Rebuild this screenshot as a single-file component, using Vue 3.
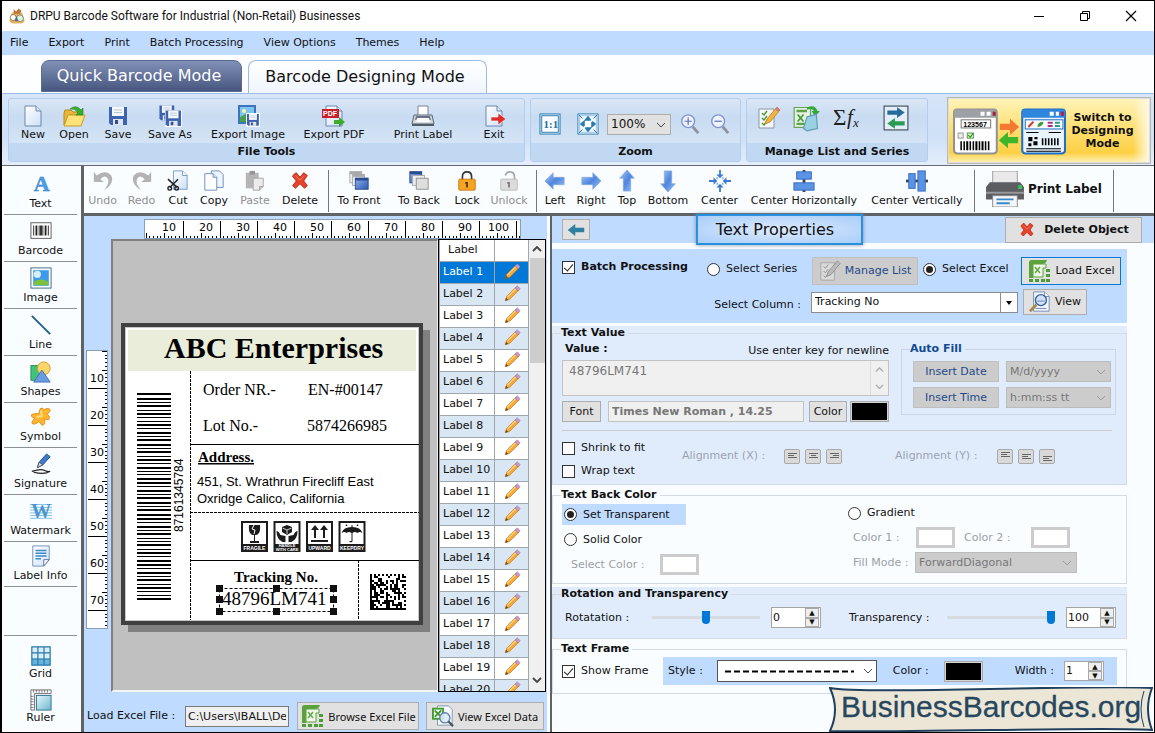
<script setup>
const menus = ['File', 'Export', 'Print', 'Batch Processing', 'View Options', 'Themes', 'Help']

const page = '<path d="M4 2h11l5 5v15H4z" fill="url(#gPage)" stroke="#6b87ad"/><path d="M15 2v5h5" fill="#dbe6f6" stroke="#6b87ad"/>'
const floppy = '<path d="M3 3h18v18H5l-2-2z" fill="#3d63b0"/><path d="M6 3h12v9H6z" fill="#f4f7fc"/><path d="M8 6h8M8 8.500h8" stroke="#b9c4d6"/><path d="M7 15h10v6H7z" fill="#dfe3ea"/><path d="M9 16h3v4H9z" fill="#2e4f93"/>'
const excel = '<path d="M2 3q0-2 3-2h15q-1 4-5 4H6v14H2z" fill="#5ba23c"/><path d="M6 5h13v4h-3v9H6z" fill="#eef7ea" stroke="#5ba23c"/><path d="M8 8l5 6M13 8l-5 6" stroke="#62a944" stroke-width="1.500"/><path d="M2 20h4v3H2zM8 20h4v3H8zM14 20h4v3h-4zM19 10h4v3h-4zM19 15h4v3h-4zM19 20h4v3h-4z" fill="#4e9a33"/>'
const notes = '<path d="M2 3h15v19H2z" fill="#f6f8fb" stroke="#8a97ab"/><path d="M5 7l2 2 3-4M5 12l2 2 3-4M5 17l2 2 3-4" fill="none" stroke="#4b9a35" stroke-width="1.400"/>'
const icons = {
  logo: '<path d="M5 8q7-5 14 0l3 10q-1 4-5 4H7q-4 0-5-4z" fill="#e7b061"/><circle cx="7" cy="14" r="4" fill="#fff" stroke="#8a5b2a"/><circle cx="16" cy="15" r="4.500" fill="#dff0e0" stroke="#6b7d55"/><path d="M7 3l4 3 3-4 4 3-2 4H8z" fill="#b6793a"/><path d="M11 12l3 7h-5z" fill="#4b6f8c"/>',
  new: page,
  open: '<path d="M2 9l1-3h6l2 2h8v3H7L2 21z" fill="#e8b73b" stroke="#b98a1c"/><path d="M2 22l4-11h17l-4 11z" fill="#ffe27a" stroke="#c99d2c"/><path d="M8 5q6-5 11 1l2-2v7h-7l2-2q-3-5-8-4z" fill="#35ad2f" stroke="#1f7f1c" stroke-width=".6"/>',
  save: floppy,
  saveAs: '<g transform="translate(-1 -1) scale(.82)">' + floppy + '</g><path d="M7 6h17v17H7z" fill="#fff"/><g transform="translate(5 4) scale(.86)">' + floppy + '</g>',
  exportImage: '<rect x="2" y="1" width="18" height="19" fill="#3e73bd"/><rect x="4" y="3" width="14" height="15" fill="#7ec4f0"/><circle cx="8" cy="7" r="2" fill="#fff3b0"/><path d="M4 18v-5l6-3 8 5v3z" fill="#4aa04a"/><path d="M10 9h14v14H10z" fill="#fff"/><g transform="translate(9 8) scale(.66)">' + floppy + '</g>',
  pdf: page + '<rect x="0" y="5" width="17" height="9" fill="#c5202c"/><text x="1" y="12" font-size="7" font-weight="bold" font-family="Liberation Sans" fill="#fff">PDF</text><path d="M12 16h5v-3l6 5-6 5v-3h-5z" fill="#3dab2b"/>',
  print: '<path d="M7 11V2h10v9" fill="#fff" stroke="#7a8493"/><path d="M3 11h18l2 9H1z" fill="#d5dae2" stroke="#596474"/><path d="M5 12h14l1 4H4z" fill="#687486"/><path d="M6 14h12l1 4H5z" fill="#f8fafc"/><path d="M1 20h22v2H1z" fill="#525c69"/>',
  exit: page + '<path d="M9 13h7v-4l8 6-8 6v-4H9z" fill="#df2b2b" stroke="#fff" stroke-width=".6"/>',
  one: '<rect x="1" y="1" width="22" height="22" fill="#cfe6f8" stroke="#2b7cae"/><rect x="3" y="3" width="18" height="18" fill="#f8fcff" stroke="#2b7cae"/><text x="5" y="16" font-size="12" font-weight="bold" font-family="Liberation Serif" fill="#1e6c9c">1:1</text>',
  fit: '<rect x="1" y="1" width="22" height="22" fill="#f3f9fe" stroke="#2b7cae"/><rect x="3" y="3" width="18" height="18" fill="none" stroke="#8fbfe0"/><path d="M12 3l5 6-2 1H9L7 9zM12 21l5-6-2-1H9l-2 1zM3 12l6-5v10zM21 12l-6-5v10z" fill="#2b7cae"/><rect x="8.500" y="8.500" width="7" height="7" fill="#fff"/><path d="M2 2l4 4M22 2l-4 4M2 22l4-4M22 22l-4-4" stroke="#2b7cae"/>',
  zoomIn: '<circle cx="10" cy="9" r="7" fill="#eef3ff" stroke="#8095d0" stroke-width="1.500"/><path d="M6 9h8M10 5v8" stroke="#5872b8" stroke-width="1.300"/><path d="M15 15l6 7" stroke="#8d929c" stroke-width="3"/>',
  zoomOut: '<circle cx="10" cy="9" r="7" fill="#eef3ff" stroke="#8095d0" stroke-width="1.500"/><path d="M6 9h8" stroke="#5872b8" stroke-width="1.300"/><path d="M15 15l6 7" stroke="#8d929c" stroke-width="3"/>',
  notes: notes + '<path d="M8 18l2-5L20 1l3 3-10 12z" fill="#f2b640" stroke="#b77d1c" stroke-width=".8"/><path d="M20 1l3 3-2 2-3-3z" fill="#d87a80"/>',
  notesOff: '<path d="M2 3h15v19H2z" fill="#dadada" stroke="#a5a5a5"/><path d="M5 7l2 2 3-4M5 12l2 2 3-4M5 17l2 2 3-4" fill="none" stroke="#8d8d8d"/><path d="M8 18l2-5L20 1l3 3-10 12z" fill="#bbb" stroke="#8f8f8f"/>',
  sheet: '<path d="M1 3h14v17H1z" fill="#e4f3df" stroke="#67a35a"/><path d="M3 6h9M3 17h9" stroke="#5fa04f" stroke-width="2"/><path d="M4 9l5 6M9 9l-5 6" stroke="#4c9a3b" stroke-width="1.500"/><path d="M12 3q7-3 9 3h2l-4 5-3-5h2q-2-3-6-1z" fill="#35a83a"/><path d="M12 11l8-2 1 12-9 2-3-2z" fill="#9bcfe3" stroke="#5d9db8"/>',
  sigma: '<text x="0" y="19" font-size="23" font-family="Liberation Serif" fill="#222">Σ</text><text x="14" y="18" font-size="21" font-style="italic" font-family="Liberation Serif" fill="#222">f</text><text x="20" y="21" font-size="13" font-style="italic" font-family="Liberation Serif" fill="#222">x</text>',
  swap: '<rect x="1" y="1" width="22" height="22" fill="#e4eefa" stroke="#3c4650"/><path d="M4 5h9V2l7 5-7 5V9H4z" fill="#256b99"/><path d="M20 15h-9v-3l-7 5 7 5v-3h9z" fill="#2c9b52"/>',
  undo: '<path d="M2 2v11h11l-4-3q5-5 8-1 3 5-4 13 12-7 8-16-6-7-16 0z" fill="#b3b3b3"/>',
  redo: '<path d="M22 2v11H11l4-3q-5-5-8-1-3 5 4 13Q-1 15 3 6q6-7 16 0z" fill="#b3b3b3"/>',
  cut: '<path d="M7 1h10l5 5v15H7z" fill="url(#gPage)" stroke="#6f98cf"/><path d="M17 1v5h5" fill="#fff" stroke="#6f98cf"/><path d="M1 10l10 9M12 10L3 19" stroke="#222" stroke-width="1.600"/><circle cx="3" cy="20" r="2" fill="none" stroke="#222" stroke-width="1.500"/><circle cx="10.500" cy="20" r="2" fill="none" stroke="#222" stroke-width="1.500"/>',
  copy: '<path d="M9 1h9l4 4v14H9z" fill="#eef5ff" stroke="#6889c0"/><path d="M2 4h9l4 4v14H2z" fill="#fff" stroke="#6889c0"/><path d="M11 4v4h4" fill="#dbe8fa" stroke="#6889c0"/>',
  paste: '<path d="M2 3h14v17H2z" fill="#b5b5b5"/><path d="M6 1h6v4H6z" fill="#969696"/><path d="M10 9h11v9l-4 4h-7z" fill="#ececec" stroke="#a3a3a3"/><path d="M21 18h-4v4" fill="#ccc" stroke="#a3a3a3"/>',
  cross: '<path d="M5 5l3-2 4 5 4-5 4 3-4 6 4 5-3 3-5-5-5 5-3-3 4-5-4-5z" fill="#e8432a" stroke="#b42413"/><path d="M7 6l5 5 4-4" fill="none" stroke="#f58a6e"/>',
  front: '<rect x="2" y="2" width="13" height="12" fill="#ededed" stroke="#a9a9a9"/><path d="M2 3h13" stroke="#a9a9a9" stroke-width="3"/><rect x="5" y="5" width="13" height="12" fill="#ededed" stroke="#a9a9a9"/><path d="M5 6h13" stroke="#a9a9a9" stroke-width="3"/><rect x="8" y="9" width="14" height="12" fill="url(#gBox)" stroke="#2c4c92"/><path d="M8 10h14" stroke="#2c4c92" stroke-width="3"/>',
  back: '<rect x="2" y="2" width="13" height="12" fill="url(#gBox)" stroke="#2c4c92"/><path d="M2 3h13" stroke="#2c4c92" stroke-width="3"/><rect x="5" y="6" width="13" height="11" fill="#ededed" stroke="#a9a9a9"/><rect x="9" y="9" width="13" height="12" fill="#dedede" stroke="#8f8f8f"/>',
  lock: '<path d="M7 11V7q0-5 5-5t5 5v4" fill="none" stroke="#333" stroke-width="1.800"/><rect x="3" y="10" width="18" height="12" rx="1" fill="#f5a524" stroke="#c97a10"/><path d="M12 14v5M10 14h3" stroke="#5a3700" stroke-width="2"/>',
  unlock: '<path d="M8 6q1-4 5-4 5 0 5 6v3" fill="none" stroke="#a5a5a5" stroke-width="1.800"/><rect x="3" y="10" width="18" height="12" rx="1" fill="#dcdcdc" stroke="#b9b9b9"/><path d="M12 14v5M10 14h3" stroke="#7b7b7b" stroke-width="2"/>',
  left: '<path d="M1 12l9-9v5h12v8H10v5z" fill="url(#gArrow)" stroke="#7da2dc" stroke-width=".7"/>',
  right: '<path d="M23 12l-9-9v5H2v8h12v5z" fill="url(#gArrow)" stroke="#7da2dc" stroke-width=".7"/>',
  top: '<path d="M12 0l8 9h-4v14H8V9H4z" fill="url(#gArrow)" stroke="#7da2dc" stroke-width=".7"/>',
  bottom: '<path d="M12 24l8-9h-4V1H8v14H4z" fill="url(#gArrow)" stroke="#7da2dc" stroke-width=".7"/>',
  center: '<path d="M12 9L8 5h3V0h2v5h3zM12 15l4 4h-3v5h-2v-5H8zM9 12l-4 4v-3H0v-2h5V8zM15 12l4-4v3h5v2h-5v3z" fill="#3f7ad0"/><path d="M8 8h2v2H8zM14 8h2v2h-2zM8 14h2v2H8zM14 14h2v2h-2z" fill="#8fb4ea"/>',
  horiz: '<path d="M12 0v24" stroke="#3b4250" stroke-width="3"/><rect x="4" y="2" width="16" height="8" fill="#5b94e6" stroke="#3368bd"/><rect x="1" y="14" width="22" height="8" fill="#5b94e6" stroke="#3368bd"/>',
  vert: '<path d="M0 12h24" stroke="#3b4250" stroke-width="3"/><rect x="3" y="4" width="7" height="16" fill="#5b94e6" stroke="#3368bd"/><rect x="13" y="1" width="8" height="22" fill="#5b94e6" stroke="#3368bd"/>',
  printer: '<path d="M7 0h26v13H7z" fill="#e9e9e9" stroke="#9a9a9a"/><path d="M4 12h32l4 5v13H0V17z" fill="#5b5d60"/><path d="M0 22h40v2H0z" fill="#96999c"/><path d="M34 15h4v4h-4z" fill="#37c25c"/><path d="M7 26h26v12H7z" fill="#f4f6f8" stroke="#86898d"/><path d="M11 30h18M11 34h14" stroke="#3b86c6" stroke-width="2"/>',
  text: '<text x="4" y="20" font-size="24" font-weight="bold" font-family="Liberation Serif" fill="#4ba0e8" stroke="#2f78c0" stroke-width=".5">A</text>',
  barcode: '<rect x="1" y="3" width="22" height="17" fill="#fff" stroke="#555"/><path d="M4 6v11M10 6v11M14 6v11M20 6v11" stroke="#222" stroke-width="1"/><path d="M7 6v11M12 6v11M17 6v11" stroke="#222" stroke-width="2"/>',
  image: '<rect x="1" y="1" width="22" height="22" fill="#fff" stroke="#3d6184"/><rect x="3.500" y="3.500" width="17" height="17" fill="#3c9be9"/><circle cx="8" cy="8" r="4" fill="#d7efff"/><path d="M4 20v-4q8-5 16 0v4z" fill="#7cc23c"/>',
  line: '<path d="M2 2l20 20" stroke="#1d5f8c" stroke-width="2"/>',
  shapes: '<rect x="1" y="5" width="12" height="16" fill="#43c27b" stroke="#248a50"/><circle cx="15" cy="8" r="7" fill="#fcd568" stroke="#c8992a"/><path d="M13 10l9 13H4z" fill="#6a9ce2" stroke="#3c6db5"/>',
  symbol: '<path d="M11 3q3-2 4 1 7-3 7 1l-3 4q4 4 1 6l-4-1q1 7-3 7l-3-4q-7 5-8 1l3-5q-5-1-3-4l8-1z" fill="#ffb52e" stroke="#dd8a14"/><path d="M12 5l1 6-6 1" fill="none" stroke="#ffdf87" stroke-width="2"/>',
  signature: '<path d="M8 16l2-6L18 1l4 3-8 9z" fill="#3e7ac9" stroke="#264f8c"/><path d="M8 16l2-6 4 3z" fill="#d8dde5" stroke="#555"/><path d="M2 20q10-3 14-1t6 1q-6 4-18 1" fill="none" stroke="#222" stroke-width="1.300"/>',
  watermark: '<path d="M0 5h24M0 8h24M0 11h24M0 14h24M0 17h24M0 20h24" stroke="#79bde6"/><text x="1" y="20" font-size="22" font-weight="bold" font-family="Liberation Serif" fill="#4a96cf">W</text>',
  info: '<path d="M3 1h18v15l-6 7H3z" fill="url(#gPage)" stroke="#6d8db8"/><path d="M6 6h12M6 9h12M6 12h12M6 15h6" stroke="#3c8bc4" stroke-width="1.400"/><path d="M21 16h-6v7z" fill="#fff" stroke="#54739c"/>',
  grid: '<rect x="2" y="2" width="20" height="20" fill="#d8eef9"/><path d="M2 15h20v7H2z" fill="#63b5df"/><path d="M2 2h20v20H2zM8.600 2v20M15.300 2v20M2 8.600h20M2 15.300h20" fill="none" stroke="#2b75a8" stroke-width="1.300"/>',
  ruler: '<path d="M1 1h22v4H5v18H1z" fill="#fff" stroke="#666"/><path d="M4 1v3M7 1v3M10 1v3M13 1v3M16 1v3M19 1v3M1 8h3M1 11h3M1 14h3M1 17h3M1 20h3" stroke="#555" stroke-width=".8"/><rect x="7" y="7" width="16" height="16" fill="url(#gTeal)" stroke="#2f6f93"/>',
  pencil: '<path d="M3 21l2-6L17 3l4 4L9 19z" fill="#f7a835" stroke="#b8741a" stroke-width=".8"/><path d="M6 16L18 4" stroke="#ffd488" stroke-width="1.600"/><path d="M16 4l3-3 4 4-3 3z" fill="#c59bc6" stroke="#8a6692" stroke-width=".6"/><path d="M3 21l1-4 3 3z" fill="#6b4a26"/>',
  excel,
  excelView: '<path d="M6 1h12l4 4v17H6z" fill="#f8fbff" stroke="#7f90a8"/><rect x="0" y="3" width="13" height="13" fill="#3f9a2f"/><path d="M2 5h9v9H2z" fill="#fff"/><path d="M3 6l7 7M10 6l-7 7" stroke="#3f9a2f" stroke-width="2"/><circle cx="14" cy="14" r="5.500" fill="#dbeaf9" fill-opacity=".9" stroke="#6382b0" stroke-width="1.500"/><path d="M18 18l5 5" stroke="#4a5361" stroke-width="2.500"/>',
  view: '<path d="M5 1h12l5 5v16H5z" fill="#f2f7ff" stroke="#6d88b5"/><path d="M17 1v5h5" fill="#fff" stroke="#6d88b5"/><circle cx="13" cy="10" r="6" fill="#cfe2f7" stroke="#3e5f96" stroke-width="1.500"/><path d="M9 11h8M7 19h12" stroke="#5f83bd"/><path d="M8 15l-7 7" stroke="#a88a45" stroke-width="3"/>',
  arrowBack: '<path d="M1 12l10-8v5h12v6H11v5z" fill="#2f7f9f"/>'
}

const fileTools = [
  ['new', 'New'], ['open', 'Open'], ['save', 'Save'], ['saveAs', 'Save As'],
  ['exportImage', 'Export Image'], ['pdf', 'Export PDF'], ['print', 'Print Label'], ['exit', 'Exit']
]
const editTools = [
  ['undo', 'Undo', 'off'], ['redo', 'Redo', 'off'], ['cut', 'Cut'], ['copy', 'Copy'],
  ['paste', 'Paste', 'off'], ['cross', 'Delete'], null,
  ['front', 'To Front'], ['back', 'To Back'], ['lock', 'Lock'], ['unlock', 'Unlock', 'off'], null,
  ['left', 'Left'], ['right', 'Right'], ['top', 'Top'], ['bottom', 'Bottom'],
  ['center', 'Center'], ['horiz', 'Center Horizontally'], ['vert', 'Center Vertically'], null
]
const sideTools = [
  ['text', 'Text'], ['barcode', 'Barcode'], ['image', 'Image'], ['line', 'Line'], ['shapes', 'Shapes'],
  ['symbol', 'Symbol', 'short'], ['signature', 'Signature'], ['watermark', 'Watermark'], ['info', 'Label Info', 'short']
]
const rows = Array.from({ length: 20 }, (_, i) => 'Label ' + (i + 1))

const hTicks = Array.from({ length: 102 }, (_, i) => ({
  p: Math.round(1.5 + i * 3.7), len: i % 10 === 0 && i > 0 ? 17 : i % 5 === 0 ? 5 : 2
}))
const vTicks = Array.from({ length: 75 }, (_, i) => ({
  p: Math.round(1 + i * 3.7), len: i % 10 === 0 && i > 0 ? 19 : i % 5 === 0 ? 5 : 2
}))

const bars = []
const barPattern = '2212121121212212121211221212212'
let y = 393
for (let i = 0; y < 600; i++) {
  const h = Number(barPattern[i % barPattern.length])
  bars.push({ y, h: Math.min(h, 600 - y) })
  y += h + (i % 3 === 0 ? 3 : 2)
}

const cells = []
let seed = 77
for (let r = 0; r < 18; r++) {
  for (let c = 0; c < 18; c++) {
    seed = (seed * 1103515245 + 12345) % 2147483648
    const edge = c === 0 || r === 17
    const clock = (r === 0 && c % 2 === 0) || (c === 17 && r % 2 === 1)
    const inner = r > 0 && c < 17 && (seed >> 12) % 100 < 52
    if (edge || clock || inner) cells.push({ r, c })
  }
}
const handles = []
for (const hx of [219, 276, 333]) {
  for (const hy of [588, 599, 611]) {
    if (!(hx === 276 && hy === 599)) handles.push({ x: hx - 3, y: hy - 3 })
  }
}
</script>

<template>
  <div class="window">
    <svg class="defs" width="0" height="0" aria-hidden="true">
      <defs>
        <linearGradient id="gPage" x1="0" y1="0" x2="1" y2="1"><stop offset="0" stop-color="#fff" /><stop offset="1" stop-color="#cfe0f7" /></linearGradient>
        <linearGradient id="gBox" x1="0" y1="0" x2="1" y2="1"><stop offset="0" stop-color="#8fb2ec" /><stop offset="1" stop-color="#2d57b0" /></linearGradient>
        <linearGradient id="gArrow" x1="0" y1="0" x2="1" y2="1"><stop offset="0" stop-color="#a9cbfb" /><stop offset=".5" stop-color="#4f86de" /><stop offset="1" stop-color="#9dc1f6" /></linearGradient>
        <linearGradient id="gTeal" x1="0" y1="0" x2="1" y2="1"><stop offset="0" stop-color="#e6f6fb" /><stop offset="1" stop-color="#6fb7cf" /></linearGradient>
      </defs>
    </svg>

    <header class="titlebar">
      <svg class="i18" viewBox="0 0 24 24" v-html="icons.logo"></svg>
      <h1>DRPU Barcode Software for Industrial (Non-Retail) Businesses</h1>
      <div class="winbtns">
        <button aria-label="Minimize"><svg width="12" height="12"><path d="M1 6.500h10" stroke="#000" /></svg></button>
        <button aria-label="Restore"><svg width="12" height="12"><path d="M1.500 3.500h7v7h-7zM3.500 3V1.500h7v7H9" fill="none" stroke="#000" /></svg></button>
        <button aria-label="Close"><svg width="12" height="12"><path d="M1 1l10 10M11 1L1 11" stroke="#000" stroke-width="1.200" /></svg></button>
      </div>
    </header>

    <nav class="menubar"><button v-for="m in menus" :key="m">{{ m }}</button></nav>

    <div class="tabs">
      <button class="tab quick">Quick Barcode Mode</button>
      <button class="tab design">Barcode Designing Mode</button>
    </div>

    <div class="ribbon">
      <section class="group g-file">
        <div class="file-tools">
          <button v-for="[ic, t] in fileTools" :key="t" class="tool">
            <svg class="i24" viewBox="0 0 24 24" v-html="icons[ic]"></svg><span>{{ t }}</span>
          </button>
        </div>
        <h2>File Tools</h2>
      </section>
      <section class="group g-zoom">
        <div class="zoom-tools">
          <button aria-label="Actual size"><svg class="i22" viewBox="0 0 24 24" v-html="icons.one"></svg></button>
          <button aria-label="Fit to window"><svg class="i22" viewBox="0 0 24 24" v-html="icons.fit"></svg></button>
          <span class="sel zoomsel">
            <select aria-label="Zoom level"><option>100%</option></select>
            <svg viewBox="0 0 10 6"><path d="M1 1l4 4 4-4" fill="none" stroke="#444" /></svg>
          </span>
          <button aria-label="Zoom in"><svg class="i22" viewBox="0 0 24 24" v-html="icons.zoomIn"></svg></button>
          <button aria-label="Zoom out"><svg class="i22" viewBox="0 0 24 24" v-html="icons.zoomOut"></svg></button>
        </div>
        <h2>Zoom</h2>
      </section>
      <section class="group g-manage">
        <div class="manage-tools">
          <button aria-label="Manage list"><svg class="i24" viewBox="0 0 24 24" v-html="icons.notes"></svg></button>
          <button aria-label="Manage Excel"><svg class="i28" viewBox="0 0 24 24" v-html="icons.sheet"></svg></button>
          <button aria-label="Formula series"><svg width="28" height="24" viewBox="0 0 28 24" v-html="icons.sigma"></svg></button>
          <button aria-label="Swap"><svg class="i26" viewBox="0 0 24 24" v-html="icons.swap"></svg></button>
        </div>
        <h2>Manage List and Series</h2>
      </section>
      <button class="switch">
        <span class="switch-in">
          <svg width="113" height="50" viewBox="0 0 111 48">
            <rect x="1" y="3" width="42" height="43" rx="3" fill="#fff" stroke="#8f9296" stroke-width="2" />
            <path d="M1 3h42v8H1z" fill="#9da0a4" /><path d="M27 5h4v4h-4zM33 5h4v4h-4z" fill="#fff" /><path d="M39 5h3v4h-3z" fill="#a02434" />
            <rect x="8" y="13" width="29" height="8" fill="#fff" stroke="#777" />
            <text x="10" y="20" font-size="7" font-weight="bold" font-family="Liberation Sans">123567</text>
            <rect x="5" y="26" width="5" height="5" fill="#eee" stroke="#999" /><rect x="14" y="26" width="6" height="5" fill="#dff3d8" stroke="#5c9a4c" /><path d="M15 28l2 2 3-4" fill="none" stroke="#2a8a2a" />
            <path d="M8 34v9M11 34v9M17 34v9M20 34v9M26 34v9M32 34v9M35 34v9" stroke="#000" stroke-width="1.500" /><path d="M14 34v9M23 34v9M29 34v9" stroke="#000" stroke-width="2" />
            <path d="M46 17h10v-5l9 8-9 8v-5H46z" fill="#f47a34" /><path d="M64 30H54v-5l-9 8 9 8v-5h10z" fill="#3fb52c" />
            <rect x="68" y="3" width="42" height="43" rx="3" fill="#e9f4ff" stroke="#1f6fc4" stroke-width="2" />
            <path d="M68 3h42v8H68z" fill="#2f86dc" /><path d="M95 5h4v4h-4zM101 5h3v4h-3z" fill="#fff" /><path d="M106 5h3v4h-3z" fill="#b02040" />
            <rect x="71" y="13" width="37" height="9" fill="#fff" stroke="#1f6fc4" />
            <path d="M74 20l5-5" stroke="#d0382c" stroke-width="2" /><path d="M83 20q0-5 6-5-1 5-6 5z" fill="#3a9a3a" /><path d="M93 16h5M93 19h5" stroke="#b0308a" stroke-width="2" /><path d="M100 16h5M100 19h5" stroke="#2f9a8a" stroke-width="2" />
            <path d="M72 25.500h12M94 25.500h12M72 41.500h34M72 44h34" stroke="#000" /><path d="M74 30h4v4h-4zM80 30h3v2h-3zM74 36h3v3h-3zM79 34h4v4h-4z" fill="#000" />
            <path d="M88 31v7M91 31v7M94 31v7M97 31v7M100 31v7M103 31v7" stroke="#000" stroke-width="1.500" />
          </svg>
          <b>Switch to Designing Mode</b>
        </span>
      </button>
    </div>

    <div class="workspace">
      <aside class="side">
        <button v-for="[ic, t, k] in sideTools" :key="t" class="stool" :class="k">
          <svg class="i22" viewBox="0 0 24 24" v-html="icons[ic]"></svg><span>{{ t }}</span>
        </button>
        <div class="side-gap"></div>
        <button class="stool plain"><svg class="i22" viewBox="0 0 24 24" v-html="icons.grid"></svg><span>Grid</span></button>
        <button class="stool plain"><svg class="i22" viewBox="0 0 24 24" v-html="icons.ruler"></svg><span>Ruler</span></button>
      </aside>

      <div class="main">
        <div class="editbar">
          <template v-for="(e, i) in editTools" :key="i">
            <button v-if="e" class="tool" :class="e[2]" :disabled="!!e[2]">
              <svg class="i22" viewBox="0 0 24 24" v-html="icons[e[0]]"></svg><span>{{ e[1] }}</span>
            </button>
            <i v-else class="vsep"></i>
          </template>
          <button class="printlabel"><svg width="38" height="36" viewBox="0 0 40 38" v-html="icons.printer"></svg><b>Print Label</b></button>
          <i class="vsep"></i>
        </div>

        <div class="panes">
          <div class="designer">
            <svg class="hruler" width="377" height="20">
              <rect x=".5" y=".5" width="376" height="19" fill="#fff" stroke="#8aa0b8" />
              <rect v-for="t in hTicks" :key="t.p" :x="t.p" :y="19 - t.len" width="1" :height="t.len" />
              <text v-for="n in 10" :key="n" :x="n * 37 - 5" y="12" text-anchor="end">{{ n * 10 }}</text>
            </svg>
            <svg class="vruler" width="22" height="279">
              <rect x=".5" y=".5" width="21" height="278" fill="#fff" stroke="#8aa0b8" />
              <rect v-for="t in vTicks" :key="t.p" :x="21 - t.len" :y="t.p" :width="t.len" height="1" />
              <text v-for="n in 7" :key="n" x="18" :y="n * 37 - 5" text-anchor="end">{{ n * 10 }}</text>
            </svg>
            <div class="canvas">
              <svg width="310" height="310" viewBox="121 323 310 310">
                <rect x="128" y="330" width="302" height="302" fill="#808080" />
                <rect x="121" y="323" width="302" height="302" fill="#404040" />
                <rect x="125.500" y="327.500" width="293" height="293" fill="#fff" stroke="#c8c8c8" />
                <rect x="128" y="330" width="288" height="41" fill="#e9edda" />
                <g font-family="Liberation Serif, serif" font-size="16">
                  <text x="164" y="358" font-size="30" font-weight="bold">ABC Enterprises</text>
                  <text x="203" y="395">Order NR.-</text>
                  <text x="308" y="395">EN-#00147</text>
                  <text x="203" y="431">Lot No.-</text>
                  <text x="307" y="431">5874266985</text>
                  <text x="198" y="462" font-weight="bold" font-size="15" text-decoration="underline">Address.</text>
                  <text x="234" y="582" font-weight="bold" font-size="15">Tracking No.</text>
                  <text x="222" y="605" font-size="19">48796LM741</text>
                </g>
                <g class="address"><text x="197" y="486">451, St. Wrathrun Firecliff East</text><text x="197" y="503">Oxridge Calico, California</text></g>
                <g stroke="#000" fill="none" stroke-width="1">
                  <path d="M190.500 371v249M190 512.500h229M358.500 560v60" stroke-dasharray="3 1" />
                  <path d="M190 444.500h229M190 560.500h229" />
                  <rect x="219.500" y="588.500" width="114" height="23" stroke-dasharray="3 2" />
                </g>
                <rect v-for="b in bars" :key="b.y" x="137" :y="b.y" width="34" :height="b.h" />
                <text x="0" y="0" transform="translate(183 532) rotate(-90)" font-family="Liberation Sans" font-size="12">87161345784</text>
                <rect v-for="h in handles" :key="h.x + '-' + h.y" :x="h.x" :y="h.y" width="7" height="7" fill="#111" />
                <rect v-for="c in cells" :key="c.r + '-' + c.c" :x="370 + c.c * 2" :y="574 + c.r * 2" width="2" height="2" />
                <g v-for="(n, i) in ['FRAGILE', 'HANDLE', 'UPWARD', 'KEEPDRY']" :key="n" :transform="`translate(${241 + i * 32.5} 521)`">
                  <rect width="27" height="31" fill="#1c1c1c" /><rect x="2" y="2" width="23" height="21" fill="#fff" />
                  <text x="13.500" :y="i === 1 ? 26 : 29" :font-size="i === 1 ? 4 : 5" font-weight="bold" font-family="Liberation Sans" fill="#fff" text-anchor="middle">{{ n }}</text>
                  <text v-if="i === 1" x="13.500" y="30" font-size="4" font-weight="bold" font-family="Liberation Sans" fill="#fff" text-anchor="middle">WITH CARE</text>
                  <path v-if="i === 0" d="M8 4h11q1 10-5 10v6h4v2H9v-2h4v-6Q7 14 8 4z" fill="#1c1c1c" />
                  <path v-if="i === 0" d="M13 4l-2 4 3 1-1 4" stroke="#fff" fill="none" />
                  <path v-if="i === 1" d="M13.500 4l5 2v5l-5 3-5-3V6zM3 10q2 0 4 4l5 1v6H9Q3 18 3 10zM24 10q-2 0-4 4l-5 1v6h3q6-3 6-11z" fill="#1c1c1c" />
                  <path v-if="i === 1" d="M9 7l4.500 2L18 7M13.500 9v4" stroke="#fff" stroke-width=".8" fill="none" />
                  <path v-if="i === 2" d="M5 19h17v2H5zM8 17V9H5l4-5 4 5h-3v8zM17 17V9h-3l4-5 4 5h-3v8z" fill="#1c1c1c" />
                  <path v-if="i === 3" d="M3 12Q5 6 13 6V4h1v2q8 0 10 6-3-2-5 0-3-2-5 0v8q0 2-3 1v-1h2v-8q-3-2-5 0-2-2-5 0zM8 3l1 2H7zM19 3l1 2h-2z" fill="#1c1c1c" />
                </g>
              </svg>
            </div>
            <div class="list">
              <div class="list-rows">
                <table>
                  <thead><tr><th>Label</th><th></th></tr></thead>
                  <tbody>
                    <tr v-for="r in rows" :key="r">
                      <td>{{ r }}</td>
                      <td><button :aria-label="'Edit ' + r"><svg class="i18" viewBox="0 0 24 24" v-html="icons.pencil"></svg></button></td>
                    </tr>
                  </tbody>
                </table>
              </div>
              <div class="scroll">
                <svg viewBox="0 0 10 6"><path d="M1 5l4-4 4 4" fill="none" stroke="#444" stroke-width="1.800" /></svg>
                <i></i>
                <svg viewBox="0 0 10 6"><path d="M1 1l4 4 4-4" fill="none" stroke="#444" stroke-width="1.800" /></svg>
              </div>
            </div>
            <div class="loadbar">
              <label for="xls">Load Excel File :</label>
              <input id="xls" value="C:\Users\IBALL\Desktop" readonly />
              <button class="btn browse"><svg class="i24" viewBox="0 0 24 24" v-html="icons.excel"></svg>Browse Excel File</button>
              <button class="btn viewdata"><svg class="i22" viewBox="0 0 24 24" v-html="icons.excelView"></svg>View Excel Data</button>
            </div>
          </div>

          <div class="props">
            <div class="props-head">
              <button class="btn backbtn" aria-label="Back"><svg class="i18" viewBox="0 0 24 24" v-html="icons.arrowBack"></svg></button>
              <h2>Text Properties</h2>
              <button class="btn delobj"><svg class="i18" viewBox="0 0 24 24" v-html="icons.cross"></svg><b>Delete Object</b></button>
            </div>

            <div class="batch">
              <div class="batch-row">
                <label class="chk b-main"><input type="checkbox" checked /><b>Batch Processing</b></label>
                <label class="chk b-series"><input type="radio" name="src" />Select Series</label>
                <button class="btn dis b-manage" disabled><svg class="i22" viewBox="0 0 24 24" v-html="icons.notesOff"></svg>Manage List</button>
                <label class="chk b-excel"><input type="radio" name="src" checked />Select Excel</label>
                <button class="btn load"><svg class="i24" viewBox="0 0 24 24" v-html="icons.excel"></svg>Load Excel</button>
              </div>
              <div class="batch-row second">
                <label class="b-col" for="col">Select Column :</label>
                <span class="sel colsel">
                  <select id="col"><option>Tracking No</option></select>
                  <svg viewBox="0 0 10 6"><path d="M2 1h6L5 5z" /></svg>
                </span>
                <button class="btn viewbtn"><svg class="i22" viewBox="0 0 24 24" v-html="icons.view"></svg>View</button>
              </div>
            </div>

            <section class="block tint">
              <fieldset>
                <legend>Text Value</legend>
                <div class="tv-top">
                  <div class="tv-left">
                    <div class="tv-head"><label for="val"><b>Value :</b></label><span>Use enter key for newline</span></div>
                    <div class="area">
                      <textarea id="val" disabled>48796LM741</textarea>
                      <div class="area-scroll">
                        <svg viewBox="0 0 10 6"><path d="M1 5l4-4 4 4" fill="none" stroke="#aaa" stroke-width="1.500" /></svg>
                        <svg viewBox="0 0 10 6"><path d="M1 1l4 4 4-4" fill="none" stroke="#aaa" stroke-width="1.500" /></svg>
                      </div>
                    </div>
                    <div class="fontrow">
                      <button class="btn fontbtn">Font</button>
                      <input aria-label="Font name" value="Times New Roman , 14.25" disabled />
                      <button class="btn colorbtn">Color</button>
                      <button class="swatch" aria-label="Text color"></button>
                    </div>
                  </div>
                  <fieldset class="autofill">
                    <legend>Auto Fill</legend>
                    <div class="af-grid">
                      <button class="btn dis" disabled>Insert Date</button>
                      <span class="sel off"><select aria-label="Date format" disabled><option>M/d/yyyy</option></select><svg viewBox="0 0 10 6"><path d="M1 1l4 4 4-4" fill="none" stroke="#999" /></svg></span>
                      <button class="btn dis" disabled>Insert Time</button>
                      <span class="sel off"><select aria-label="Time format" disabled><option>h:mm:ss tt</option></select><svg viewBox="0 0 10 6"><path d="M1 1l4 4 4-4" fill="none" stroke="#999" /></svg></span>
                    </div>
                  </fieldset>
                </div>
                <div class="tv-bottom">
                  <div class="stack">
                    <label class="chk"><input type="checkbox" />Shrink to fit</label>
                    <label class="chk"><input type="checkbox" />Wrap text</label>
                  </div>
                  <div class="align"><span>Alignment (X) :</span>
                    <button v-for="(d, i) in ['M3 3h9M3 5h6M3 7h9', 'M3 3h9M5 5h5M3 7h9', 'M3 3h9M6 5h6M3 7h9']" :key="i" disabled :aria-label="'Horizontal ' + (i + 1)"><svg width="14" height="13"><path :d="d" transform="translate(0 .5)" stroke="#666" /></svg></button>
                  </div>
                  <div class="align"><span>Alignment (Y) :</span>
                    <button v-for="(d, i) in ['M3 2h9M3 4h6M3 6h9', 'M3 4h9M3 6h6M3 8h9', 'M3 6h9M3 8h6M3 10h9']" :key="i" disabled :aria-label="'Vertical ' + (i + 1)"><svg width="14" height="13"><path :d="d" transform="translate(0 .5)" stroke="#666" /></svg></button>
                  </div>
                </div>
              </fieldset>
            </section>

            <section class="block">
              <fieldset>
                <legend>Text Back Color</legend>
                <div class="backcolor">
                  <div class="bc-left">
                    <label class="chk hot"><input type="radio" name="bc" checked />Set Transparent</label>
                    <label class="chk"><input type="radio" name="bc" />Solid Color</label>
                    <div class="bc-line mute"><span>Select Color :</span><button class="swatch white" aria-label="Solid color" disabled></button></div>
                  </div>
                  <div class="bc-right">
                    <label class="chk"><input type="radio" name="bc" />Gradient</label>
                    <div class="bc-colors mute">
                      <span>Color 1 :</span><button class="swatch white" aria-label="Color 1" disabled></button>
                      <span class="c2">Color 2 :</span><button class="swatch white" aria-label="Color 2" disabled></button>
                    </div>
                    <div class="bc-fill mute">
                      <label for="fill">Fill Mode :</label>
                      <span class="sel off"><select id="fill" disabled><option>ForwardDiagonal</option></select><svg viewBox="0 0 10 6"><path d="M1 1l4 4 4-4" fill="none" stroke="#999" /></svg></span>
                    </div>
                  </div>
                </div>
              </fieldset>
            </section>

            <section class="block tint">
              <fieldset>
                <legend>Rotation and Transparency</legend>
                <div class="rot">
                  <label class="rot-l" for="rot">Rotatation :</label><input id="rot" type="range" min="0" max="100" value="50" />
                  <span class="spin"><input aria-label="Rotation value" value="0" /><span><button aria-label="More">▲</button><button aria-label="Less">▼</button></span></span>
                  <label class="rot-t" for="tr">Transparency :</label><input id="tr" type="range" min="0" max="100" value="100" />
                  <span class="spin"><input aria-label="Transparency value" value="100" /><span><button aria-label="More">▲</button><button aria-label="Less">▼</button></span></span>
                </div>
              </fieldset>
            </section>

            <section class="block last">
              <fieldset>
                <legend>Text Frame</legend>
                <div class="frame">
                  <label class="chk"><input type="checkbox" checked />Show Frame</label>
                  <div class="framebar">
                    <span>Style :</span>
                    <button class="stylesel" aria-label="Frame style">
                      <svg width="129" height="3"><path d="M0 1.500h129" stroke="#000" stroke-width="2" stroke-dasharray="6 3" /></svg>
                      <svg width="10" height="6"><path d="M1 1l4 4 4-4" fill="none" stroke="#444" /></svg>
                    </button>
                    <span>Color :</span><button class="swatch" aria-label="Frame color"></button>
                    <label for="fw">Width :</label>
                    <span class="spin narrow"><input id="fw" value="1" /><span><button aria-label="More">▲</button><button aria-label="Less">▼</button></span></span>
                  </div>
                </div>
              </fieldset>
            </section>
          </div>
        </div>
      </div>
    </div>

    <a class="banner" href="#">
      <svg width="324" height="45" viewBox="0 0 324 45">
        <path d="M1 1q20 4 160 1T323 1q-8 21 0 42-20-2-160 0T1 44q10-21 0-43z" fill="#ece6d6" stroke="#21405f" stroke-width="2" />
        <path d="M315 4q-6 18 0 36" fill="none" stroke="#21405f" stroke-width="1" />
        <text x="12" y="30" font-family="Liberation Sans, sans-serif" font-size="30" fill="#27475f" stroke="#27475f" stroke-width=".3">BusinessBarcodes.org</text>
      </svg>
    </a>
  </div>
</template>

<style>
body { background: #fff; }
</style>

<style scoped>
* { box-sizing: border-box; }
.window { position: relative; display: flex; flex-direction: column; height: 100vh; overflow: hidden; border: 1px solid #000; border-left-width: 2px; background: #fafdff; color: #111; font-family: "DejaVu Sans", Verdana, sans-serif; font-size: 11px; line-height: 14px; }
.defs { position: absolute; }
button, input, select, textarea { font: inherit; color: inherit; margin: 0; }
button { border: 0; background: none; padding: 0; }
svg { display: block; flex: none; }
h1, h2 { margin: 0; }
.i18 { width: 18px; height: 18px; }
.i22 { width: 22px; height: 22px; }
.i24 { width: 24px; height: 24px; }
.i26 { width: 26px; height: 26px; }
.i28 { width: 28px; height: 28px; }

.titlebar { display: flex; align-items: center; gap: 4px; height: 30px; padding-left: 6px; background: #fff; flex: none; }
.titlebar h1 { flex: 1; font: 12px Roboto, "Noto Sans", sans-serif; }
.winbtns { display: flex; }
.winbtns button { display: grid; place-items: center; width: 46px; height: 30px; }
.menubar { display: flex; gap: 20px; height: 24px; padding: 0 8px; background: #bfdbff; flex: none; }
.tabs { display: flex; gap: 6px; height: 38px; padding: 5px 39px 0; background: #fcfeff; flex: none; }
.tab { padding: 0 5px 0 0; height: 33px; font-size: 16px; white-space: nowrap; border-radius: 8px 8px 0 0; }
.quick { width: 201px; height: 32px; color: #fff; background: linear-gradient(#8090b6, #46567f); border: 1px solid #5a6a92; }
.design { width: 239px; background: linear-gradient(#fff, #eff5fd); border: 1px solid #9dbbe4; border-bottom: 0; }

.ribbon { display: flex; height: 73px; padding: 4px 3px 0 6px; flex: none; background: linear-gradient(#d6e5f7, #cfe1f7 60%, #e4eefb); border-top: 1px solid #9dbbe4; border-bottom: 1px solid #666b75; }
.group { display: flex; flex-direction: column; height: 64px; border: 1px solid #b3cdec; border-radius: 3px; background: linear-gradient(#dae7f6, #c8dbf1 30%, #d4e4f6 70%); }
.group h2 { margin-top: auto; height: 18px; font-size: 11px; line-height: 18px; text-align: center; background: #c0d8f2; }
.g-file { width: 517px; }
.g-zoom { width: 211px; margin-left: 5px; }
.g-manage { width: 182px; margin-left: 5px; }
.tool { display: flex; flex-direction: column; align-items: center; white-space: nowrap; min-width: 0; }
.file-tools { display: grid; grid-template-columns: 40px 42px 46px 58px 98px 74px 104px 38px; padding: 5px 0 0 4px; }
.file-tools .tool { height: 37px; justify-content: space-between; }
.zoom-tools { display: flex; align-items: center; gap: 8px; padding: 14px 0 0 8px; }
.zoom-tools > button:nth-child(2) { margin-left: 8px; }
.sel { position: relative; display: block; }
.sel select { display: block; width: 100%; height: 21px; padding: 0 3px; appearance: none; border: 1px solid #8c8c8c; border-radius: 0; background: #fff; }
.sel svg { position: absolute; right: 5px; top: 8px; width: 10px; height: 6px; pointer-events: none; }
.sel.off select { background: #ccc; border-color: #bcbcbc; color: #777; opacity: 1; }
.zoomsel { width: 64px; }
.zoomsel select { background: #e1e1e1; border-color: #adadad; font-size: 12px; }
.manage-tools { display: flex; align-items: center; gap: 12px; padding: 5px 0 0 10px; }
.manage-tools button:last-child { margin-left: 10px; }
.switch { margin: -1px 0 0 auto; padding: 1px; height: 67px; width: 204px; background: #ddd; border: 1px solid #b9b9b9; }
.switch-in { display: flex; align-items: center; height: 100%; padding: 0 10px 0 4px; background: linear-gradient(90deg, #fff0 92%, #fff8e0), linear-gradient(#fff3b8, #ffe27c 40%, #fdd044 85%, #ffeeb0); }
.switch b { flex: 1; font-size: 11px; line-height: 13px; }

.workspace { display: flex; flex: 1; min-height: 0; }
.side { display: flex; flex-direction: column; flex: none; width: 82px; padding: 2px 4px 0 2px; border-right: 3px solid #5f6368; }
.stool { display: flex; flex-direction: column; align-items: center; justify-content: flex-end; gap: 2px; height: 47px; padding-bottom: 3px; border-bottom: 1px solid #8c9096; }
.stool.short { height: 45px; }
.stool.plain { border: 0; height: 45px; margin-top: -1px; gap: 0; padding: 0; }
.side-gap { height: 49px; border-bottom: 1px solid #8c9096; }
.side-gap + .stool { margin: 0; }
.main { display: flex; flex-direction: column; flex: 1; min-width: 0; }
.editbar { display: grid; grid-template-columns: 37px 41px 32px 40px 42px 48px 8px 54px 66px 30px 54px 1px 36px 36px 36px 46px 57px 112px 114px 1px 138px 1px; height: 50px; flex: none; padding-top: 4px; border-bottom: 3px solid #5f6368; }
.editbar .tool { gap: 2px; height: 38px; }
.editbar .off { color: #8f8f8f; }
.vsep { width: 1px; height: 42px; background: #777; margin-left: auto; margin-right: auto; }
.printlabel { display: flex; align-items: center; gap: 4px; padding-left: 11px; height: 38px; }
.printlabel b { font-size: 12px; }
.panes { display: flex; flex: 1; min-height: 0; }

.designer { display: grid; grid-template-columns: 27px 327px 108px; grid-template-rows: 23px 1fr 40px; flex: none; width: 463px; background: #bfdbff; }
.hruler { grid-column: 1 / 4; margin: 3px 0 0 60px; }
.vruler { margin: 111px 0 0 2px; }
.canvas { padding: 82px 0 0 8px; background: #c0c0c0; border: 2px solid #808080; border-right: 1px solid #eee; border-bottom: 2px solid #f4f4f4; overflow: hidden; }
.address { font: 13px "Liberation Sans", Arial, sans-serif; }
.list { display: flex; min-height: 0; overflow: hidden; border: 1px solid #000; background: #fff; }
.list-rows { flex: none; overflow: hidden; }
table { border-collapse: collapse; table-layout: fixed; width: 90px; }
th, td { height: 22px; padding: 0 2px 0 3px; border: 1px solid #9fa6ae; font-weight: 400; white-space: nowrap; }
th { height: 21px; border-top: 0; }
th:first-child { width: 55px; padding-left: 8px; text-align: left; }
td:last-child { padding: 0; }
td button { display: grid; place-items: center; width: 100%; height: 20px; }
tbody tr:nth-child(even) { background: #d9e6f3; }
tbody tr:first-child { background: #0078d7; color: #fff; }
.scroll { display: flex; flex-direction: column; align-items: center; flex: 1; background: #f0f0f0; padding-bottom: 2px; }
.scroll svg { width: 10px; height: 6px; margin: 6px 0; }
.scroll i { width: 15px; height: 105px; background: #cdcdcd; margin-bottom: auto; }
.loadbar { grid-column: 1 / 4; display: flex; align-items: center; padding: 8px 0 0 3px; align-self: center; white-space: nowrap; }
.loadbar label { width: 98px; }
.loadbar input { flex: none; width: 104px; height: 21px; margin-right: 8px; padding: 0 2px; border: 1px solid #7a7a7a; background: #f0f0f0; }
.btn { display: flex; align-items: center; justify-content: center; gap: 4px; flex: none; border: 1px solid #adadad; background: #e1e1e1; white-space: nowrap; }
.btn.dis { background: #ccc; border-color: #bfbfbf; color: #1e4a8a; }
.browse { width: 122px; height: 28px; }
.viewdata { width: 118px; height: 28px; margin-left: 7px; }
.browse, .viewdata { font: 11px "Noto Sans", sans-serif; }

.props { flex: 1; min-width: 0; margin-left: 3px; border-left: 2px solid #5f6368; }
.props-head { display: flex; align-items: center; justify-content: space-between; height: 27px; padding: 0 12px 0 10px; background: #bfdbff; }
.backbtn { width: 28px; height: 21px; }
.props-head h2 { width: 167px; height: 31px; margin-left: -37px; border: 2px solid #2a8fdc; background: radial-gradient(#dcebff, #a9cdf8); box-shadow: 0 0 4px #7a8ca5; font-size: 16px; font-weight: 400; line-height: 27px; text-align: center; padding-right: 8px; }
.delobj { width: 137px; height: 26px; gap: 8px; }
.batch { margin: 6px 27px 0 0; padding: 8px 6px 8px 10px; background: #bfdbff; }
.batch-row { display: flex; align-items: center; height: 28px; }
.batch-row.second { height: 26px; margin-top: 4px; }
.chk { display: flex; align-items: center; gap: 6px; white-space: nowrap; }
.chk input { appearance: none; position: relative; flex: none; width: 13px; height: 13px; border: 1px solid #333; background: #fff; }
.chk input[type=radio] { border-radius: 50%; }
.chk input[type=radio]:checked::after { content: ""; position: absolute; inset: 2px; border-radius: 50%; background: #222; }
.chk input[type=checkbox]:checked::after { content: ""; position: absolute; left: 3px; top: 0; width: 4px; height: 8px; border: solid #222; border-width: 0 1px 1px 0; rotate: 40deg; }
.b-main { width: 145px; padding-bottom: 8px; }
.b-series { width: 105px; padding-bottom: 4px; }
.b-manage { width: 106px; height: 28px; }
.b-excel { width: 98px; padding: 0 0 4px 5px; }
.load { width: 100px; height: 28px; border-color: #0078d7; margin-left: auto; }
.b-col { width: 249px; padding: 6px 10px 0 0; text-align: right; }
.colsel { width: 207px; }
.colsel svg { right: 4px; }
.colsel::after { content: ""; position: absolute; right: 17px; top: 0; width: 1px; height: 21px; background: #8c8c8c; }
.viewbtn { width: 64px; height: 26px; margin-left: 5px; }

.block { margin: 3px 27px 0 0; background: #fafdff; }
.block.tint { background: #e0ecfb; }
fieldset { margin: 0; padding: 0 4px 0 9px; border: 1px solid #d3dbe6; min-width: 0; }
legend { padding: 0 3px 0 0; margin-left: -1px; font-weight: 700; }
.tv-top { display: flex; gap: 12px; align-items: flex-start; }
.tv-left { width: 327px; }
.tv-head { display: flex; justify-content: space-between; height: 20px; padding: 2px 0 0 3px; }
.tv-head span { padding-top: 2px; }
.area { display: flex; height: 36px; border: 1px solid #c3c3c3; background: #f0f0f0; }
.area textarea { flex: 1; border: 0; padding: 3px 6px; background: none; resize: none; overflow: hidden; font-size: 12px; color: #777; }
.area-scroll { display: flex; flex-direction: column; justify-content: space-between; width: 18px; padding: 6px 4px; border-left: 1px solid #ddd; }
.fontrow { display: flex; margin-top: 5px; height: 21px; }
.fontbtn { width: 39px; }
.fontrow input { width: 196px; height: 21px; margin: 0 5px 0 7px; padding: 0 3px; border: 1px solid #c3c3c3; background: #f0f0f0; color: #777; font-weight: 700; }
.colorbtn { width: 38px; margin-right: 3px; }
.swatch { width: 39px; height: 21px; border: 2px solid #d5d5d5; outline: 1px solid #aaa; outline-offset: -1px; background: #000; flex: none; }
.swatch.white { background: #fff; border: 3px solid #ccc; outline: 0; }
.autofill { width: 215px; margin-top: 2px; padding: 5px 4px 6px 11px; border-color: #c9d6e8; }
.autofill legend { margin-left: -3px; color: #134a91; }
.af-grid { display: grid; grid-template-columns: 86px 105px; gap: 5px 7px; }
.tv-bottom { display: grid; grid-template-columns: 120px 213px 1fr; margin: 8px 10px 0 0; padding: 10px 0 6px; border-top: 1px solid #ccc; }
.stack { display: grid; gap: 9px; }
.align { display: flex; align-items: center; gap: 5px; height: 30px; color: #9aa3b0; }
.align span { width: 97px; }
.align button { border: 1px solid #aaa; border-radius: 2px; background: #d9d9d9; width: 16px; height: 15px; }
.backcolor { display: grid; grid-template-columns: 286px 1fr; height: 81px; }
.bc-left { padding-top: 2px; }
.bc-left .chk { padding-left: 2px; height: 21px; margin-bottom: 4px; }
.bc-left .hot { width: 124px; background: #bfdbff; }
.mute { color: #9a9fa8; }
.bc-line { display: flex; padding: 0 0 0 9px; align-items: center; }
.bc-line span { width: 89px; }
.bc-right { padding-top: 4px; }
.bc-colors, .bc-fill { display: flex; align-items: center; padding-left: 5px; }
.bc-colors { margin: 7px 0 4px; }
.bc-colors span { width: 63px; }
.bc-colors .c2 { width: 67px; margin-left: 9px; }
.bc-fill label { width: 62px; }
.bc-fill .sel { width: 162px; }
.rot { display: flex; align-items: center; height: 37px; padding: 0 0 4px 3px; }
.rot-l { width: 87px; }
.rot-t { width: 98px; margin-left: 28px; }
input[type=range] { appearance: none; flex: none; width: 108px; height: 21px; margin-right: 11px; background: linear-gradient(#d5dbe1, #d5dbe1) no-repeat center / 100% 3px; }
input[type=range]::-webkit-slider-thumb { appearance: none; width: 8px; height: 13px; border-radius: 0 0 4px 4px; background: #0078d7; }
.spin { display: flex; flex: none; width: 50px; height: 21px; padding: 0 1px 0 0; border: 1px solid #a5a5a5; background: #fff; }
.spin input { flex: 1; min-width: 0; width: 0; border: 0; padding: 0 1px; background: none; }
.spin > span { display: flex; flex-direction: column; width: 14px; }
.spin button { flex: 1; border: 1px solid #aaa; background: #eee; font-size: 7px; line-height: 6px; }
.spin.narrow { width: 40px; height: 20px; }
.frame { display: flex; align-items: center; padding: 1px 0 8px; }
.frame .chk { width: 101px; }
.framebar { display: flex; align-items: center; flex: 1; height: 28px; margin-right: 5px; padding: 0 13px 0 5px; background: #bfdbff; }
.stylesel { display: flex; align-items: center; justify-content: space-between; width: 160px; height: 22px; margin: 0 16px 0 14px; padding: 0 3px 0 7px; border: 1px solid #555; background: #fff; }
.framebar .swatch { margin: 0 32px 0 15px; }
.framebar .spin { margin-left: auto; }
.banner { position: absolute; right: 1px; bottom: 0; }
</style>
